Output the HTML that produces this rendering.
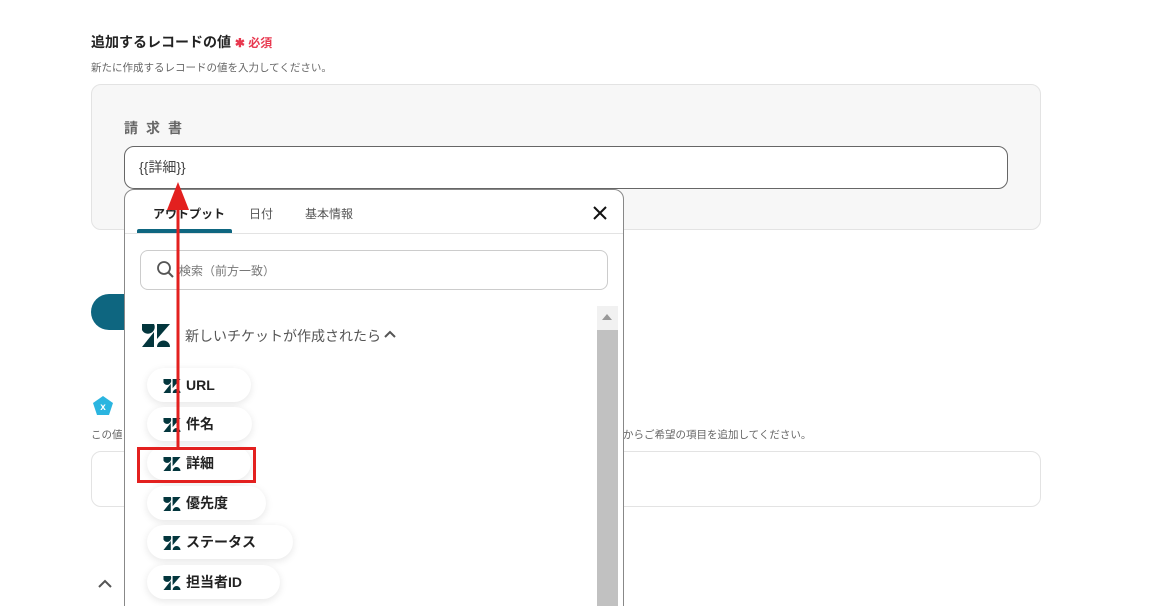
<!DOCTYPE html>
<html><head><meta charset="utf-8"><style>
*{box-sizing:border-box;margin:0;padding:0}
html,body{width:1164px;height:606px;overflow:hidden}
body{background:#fff;font-family:"Liberation Sans","Noto Sans CJK JP",sans-serif;position:relative;color:#333}
.a{position:absolute}
.pill{position:absolute;left:147px;height:34px;border-radius:17px;background:#fff;box-shadow:0 2px 8px rgba(0,0,0,.10);font-size:14px;font-weight:bold;color:#222;line-height:34px;padding-left:39px}
.pill svg{position:absolute;left:16px;top:11px}
</style></head><body>
<svg width="0" height="0" style="position:absolute"><defs><g id="zd"><path d="M0 0H12A6 6 0 0 1 0 6Z" fill="#03363d"/><polygon points="12,8 12,23 0,23" fill="#03363d"/><polygon points="15,0 28,0 15,15" fill="#03363d"/><path d="M15 23A6.5 6.5 0 0 1 28 23Z" fill="#03363d"/></g></defs></svg>
<div class="a" style="left:91px;top:32px;font-size:14px;font-weight:bold;color:#222">追加するレコードの値 <span style="color:#e8384f;font-size:12px">✱ 必須</span></div>
<div class="a" style="left:91px;top:60px;font-size:10.5px;color:#666">新たに作成するレコードの値を入力してください。</div>
<div class="a" style="left:91px;top:84px;width:950px;height:146px;background:#f7f7f7;border:1px solid #e3e3e3;border-radius:10px"></div>
<div class="a" style="left:124px;top:118px;font-size:14px;color:#666;letter-spacing:8px;font-weight:bold">請求書</div>
<div class="a" style="left:124px;top:146px;width:884px;height:43px;background:#fff;border:1px solid #666;border-radius:10px;font-size:14px;line-height:41px;padding-left:14px;color:#444">{{詳細}}</div>
<div class="a" style="left:91px;top:294px;width:200px;height:36px;background:#0e6680;border-radius:18px"></div>
<svg class="a" style="left:92px;top:395px" width="22" height="22" viewBox="0 0 22 22"><polygon points="11,1 21,8 17,20 5,20 1,8" fill="#2bb5e0"/><text x="11" y="15" font-size="10" fill="#fff" text-anchor="middle" font-family="Liberation Sans" font-weight="bold">x</text></svg>
<div class="a" style="left:91px;top:427px;font-size:10.5px;color:#666">この値</div>
<div class="a" style="left:623px;top:427px;font-size:10.5px;color:#666">からご希望の項目を追加してください。</div>
<div class="a" style="left:91px;top:451px;width:950px;height:56px;background:#fff;border:1px solid #e3e3e3;border-radius:10px"></div>
<svg class="a" style="left:97px;top:578px" width="16" height="12"><path d="M2 9 L8 3 L14 9" stroke="#555" stroke-width="2" fill="none"/></svg>
<div class="a" style="left:124px;top:189px;width:500px;height:430px;background:#fff;border:1px solid #888;border-radius:10px"></div>
<div class="a" style="left:153px;top:205px;font-size:12px;font-weight:bold;color:#222">アウトプット</div>
<div class="a" style="left:249px;top:205px;font-size:12px;color:#555">日付</div>
<div class="a" style="left:305px;top:205px;font-size:12px;color:#555">基本情報</div>
<div class="a" style="left:125px;top:233px;width:498px;height:1px;background:#e3e3e3"></div>
<div class="a" style="left:137px;top:229px;width:95px;height:4px;background:#0e6680;border-radius:2px 2px 0 0"></div>
<svg class="a" style="left:592px;top:205px" width="16" height="16"><path d="M2 2L14 14M14 2L2 14" stroke="#111" stroke-width="2"/></svg>
<div class="a" style="left:140px;top:250px;width:468px;height:40px;border:1px solid #ccc;border-radius:8px"></div>
<svg class="a" style="left:156px;top:260px" width="20" height="20"><circle cx="8" cy="8" r="6" stroke="#555" stroke-width="1.8" fill="none"/><path d="M12.5 12.5L17 17" stroke="#555" stroke-width="2"/></svg>
<div class="a" style="left:179px;top:262px;font-size:12px;color:#777">検索（前方一致）</div>
<div class="a" style="left:597px;top:306px;width:21px;height:300px;background:#f1f1f1"></div>
<div class="a" style="left:597px;top:330px;width:21px;height:276px;background:#c1c1c1"></div>
<svg class="a" style="left:601px;top:313px" width="12" height="8"><polygon points="6,1 11,7 1,7" fill="#999"/></svg>
<svg class="a" style="left:142px;top:324px" width="28" height="23" viewBox="0 0 28 23"><use href="#zd"/></svg>
<div class="a" style="left:185px;top:326px;font-size:14px;color:#555">新しいチケットが作成されたら</div>
<svg class="a" style="left:383px;top:329px" width="14" height="10"><path d="M2 8L7 3L12 8" stroke="#555" stroke-width="2" fill="none"/></svg>
<div class="pill" style="top:368px;width:104px"><svg width="18" height="14" viewBox="0 0 28 23"><use href="#zd"/></svg>URL</div>
<div class="pill" style="top:407px;width:105px"><svg width="18" height="14" viewBox="0 0 28 23"><use href="#zd"/></svg>件名</div>
<div class="pill" style="top:446px;width:104px"><svg width="18" height="14" viewBox="0 0 28 23"><use href="#zd"/></svg>詳細</div>
<div class="pill" style="top:486px;width:119px"><svg width="18" height="14" viewBox="0 0 28 23"><use href="#zd"/></svg>優先度</div>
<div class="pill" style="top:525px;width:146px"><svg width="18" height="14" viewBox="0 0 28 23"><use href="#zd"/></svg>ステータス</div>
<div class="pill" style="top:565px;width:133px"><svg width="18" height="14" viewBox="0 0 28 23"><use href="#zd"/></svg>担当者ID</div>
<div class="a" style="left:137px;top:447px;width:119px;height:36px;border:3px solid #e3201f"></div>
<svg class="a" style="left:160px;top:180px" width="36" height="270"><line x1="18" y1="28" x2="18" y2="268" stroke="#e3201f" stroke-width="3"/><polygon points="18,2 7,30 29,30" fill="#e3201f"/></svg>
</body></html>
